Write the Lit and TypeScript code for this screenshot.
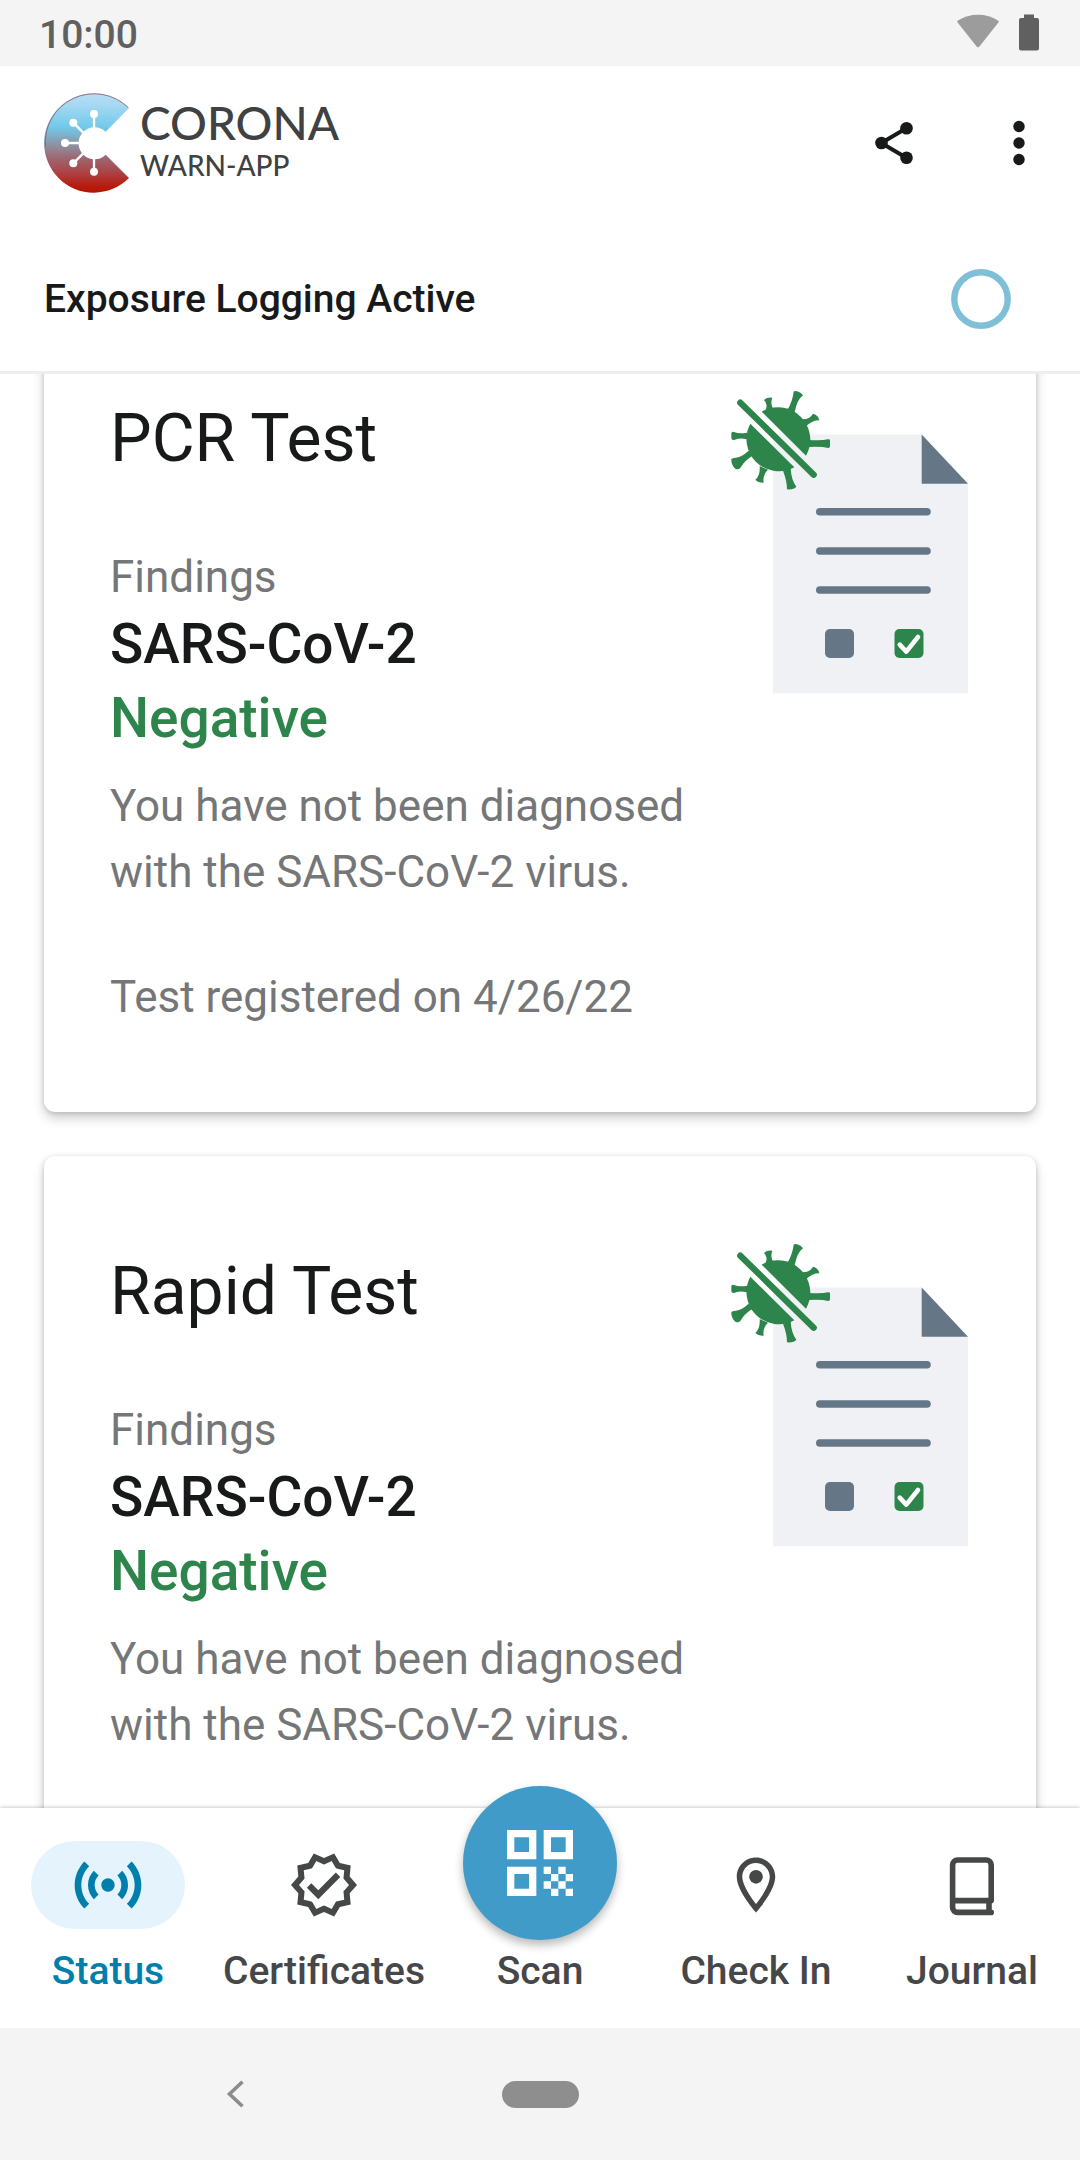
import { LitElement, html, css, svg } from "lit";
import { customElement, property, query, state } from "lit/decorators.js";
import { classMap } from "lit/directives/class-map.js";

interface TestResult {
  title: string;
  finding: string;
  result: string;
  text: string;
  registered: string;
}

const TESTS: TestResult[] = [
  {
    title: "PCR Test",
    finding: "SARS-CoV-2",
    result: "Negative",
    text: "You have not been diagnosed with the SARS-CoV-2 virus.",
    registered: "Test registered on 4/26/22",
  },
  {
    title: "Rapid Test",
    finding: "SARS-CoV-2",
    result: "Negative",
    text: "You have not been diagnosed with the SARS-CoV-2 virus.",
    registered: "Test registered on 4/26/22",
  },
];

const ICONS = {
  status: svg`<svg width="80" height="80" viewBox="0 0 24 24" fill="currentColor" aria-hidden="true">
    <path d="M7.76 16.24C6.67 15.16 6 13.66 6 12s.67-3.16 1.76-4.24l1.42 1.42C8.45 9.9 8 10.9 8 12c0 1.1.45 2.1 1.17 2.83l-1.41 1.41zm8.48 0C17.33 15.16 18 13.66 18 12s-.67-3.16-1.76-4.24l-1.42 1.42C15.55 9.9 16 10.9 16 12c0 1.1-.45 2.1-1.17 2.83l1.41 1.41zM12 10c-1.1 0-2 .9-2 2s.9 2 2 2 2-.9 2-2-.9-2-2-2zm8 2c0 2.21-.9 4.21-2.35 5.65l1.42 1.42C20.88 17.26 22 14.76 22 12s-1.12-5.26-2.93-7.07l-1.42 1.42C19.1 7.79 20 9.79 20 12zM6.35 6.35L4.93 4.93C3.12 6.74 2 9.24 2 12s1.12 5.26 2.93 7.07l1.42-1.42C4.9 16.21 4 14.21 4 12s.9-4.21 2.35-5.65z"/></svg>`,
  certificates: svg`<svg width="72" height="72" viewBox="0 0 24 24" fill="currentColor" aria-hidden="true">
    <path d="M23 11.99l-2.44-2.79.34-3.69-3.61-.82L15.4 1.5 12 2.96 8.6 1.5 6.71 4.69 3.1 5.5l.34 3.7L1 11.99l2.44 2.79-.34 3.7 3.61.82 1.89 3.2 3.4-1.47 3.4 1.46 1.89-3.19 3.61-.82-.34-3.69L23 11.99zm-3.95 1.48l-.56.65.08.85.18 1.95-1.9.43-.84.19-.44.74-.99 1.68-1.78-.77-.8-.34-.79.34-1.78.77-.99-1.67-.44-.74-.84-.19-1.9-.43.18-1.96.08-.85-.56-.65L3.67 12l1.29-1.48.56-.65-.09-.86-.18-1.94 1.9-.43.84-.19.44-.74.99-1.68 1.78.77.8.34.79-.34 1.78-.77.99 1.68.44.74.84.19 1.9.43-.18 1.95-.08.85.56.65 1.29 1.47-1.28 1.48z"/>
    <path d="M10.09 13.75l-2.32-2.33-1.48 1.49 3.8 3.81 7.34-7.36-1.48-1.49z"/></svg>`,
  scan: svg`<svg width="88" height="88" viewBox="0 0 24 24" fill="currentColor" fill-rule="evenodd" aria-hidden="true">
    <path d="M3 11h8V3H3zM5 5h4v4H5zM3 21h8v-8H3zM5 15h4v4H5zM13 3v8h8V3zM19 9h-4V5h4z"/>
    <path d="M19 19h2v2h-2zM13 13h2v2h-2zM15 15h2v2h-2zM13 17h2v2h-2zM15 19h2v2h-2zM17 17h2v2h-2zM17 13h2v2h-2zM19 15h2v2h-2z"/></svg>`,
  checkin: svg`<svg width="66" height="66" viewBox="0 0 24 24" fill="currentColor" aria-hidden="true">
    <path d="M12 2C8.13 2 5 5.13 5 9c0 5.25 7 13 7 13s7-7.75 7-13c0-3.87-3.13-7-7-7zM7 9c0-2.76 2.24-5 5-5s5 2.24 5 5c0 2.88-2.88 7.19-5 9.88C9.92 16.21 7 11.85 7 9z"/>
    <circle cx="12" cy="9" r="2.5"/></svg>`,
  journal: svg`<svg width="66" height="66" viewBox="0 0 66 66" fill="none" stroke="currentColor" stroke-width="5.6" stroke-linecap="round" aria-hidden="true">
    <path d="M52.2 48.6V13a5 5 0 0 0-5-5H18.6a5 5 0 0 0-5 5v42.4a5 5 0 0 0 5 5h33.6"/>
    <path d="M14 48.6h38M50 49v11" stroke-linecap="butt"/></svg>`,
};

const TABS: { id: keyof typeof ICONS; label: string }[] = [
  { id: "status", label: "Status" },
  { id: "certificates", label: "Certificates" },
  { id: "scan", label: "Scan" },
  { id: "checkin", label: "Check In" },
  { id: "journal", label: "Journal" },
];

@customElement("test-card")
class TestCard extends LitElement {
  @property({ attribute: false }) test!: TestResult;

  static styles = css`
    :host {
      display: block;
      color: #17191a;
      background: #fff;
      border-radius: 11px;
      box-shadow: 0 6px 12px rgba(0, 0, 0, 0.2), 0 1px 5px rgba(0, 0, 0, 0.14);
    }
    .card {
      display: flex;
      align-items: flex-start;
      padding: 66px;
    }
    .body {
      flex: 1;
      min-width: 0;
      padding: 31px 0 16px;
    }
    .art {
      flex: none;
      display: block;
    }
    h2,
    p {
      margin: 0;
      font-weight: 400;
    }
    h2 {
      font-size: 66px;
      line-height: 78px;
      margin-bottom: 73px;
    }
    .muted {
      font-size: 44px;
      line-height: 66px;
      color: #757677;
    }
    .caption {
      line-height: 52px;
    }
    .strong {
      font-size: 55px;
      line-height: 64px;
      font-weight: 500;
      margin-top: 9px;
    }
    .negative {
      color: #2e854b;
      margin: 10px 0 23px;
    }
    .date {
      margin-top: 59px;
    }
  `;

  render() {
    const t = this.test;
    return html`
      <article class="card">
        <div class="body">
          <h2>${t.title}</h2>
          <p class="muted caption">Findings</p>
          <p class="strong">${t.finding}</p>
          <p class="strong negative">${t.result}</p>
          <p class="muted">${t.text}</p>
          <p class="muted date">${t.registered}</p>
        </div>
        <svg class="art" width="246" height="330" viewBox="0 0 246 330" aria-hidden="true">
          <path d="M49 65.5H197.7L244 114.7V324.3H49Z" fill="#f0f1f4" />
          <path d="M197.7 65.5L244 114.7H197.7Z" fill="#657786" />
          <path d="M95.8 142.8H203M95.8 182H203M95.8 221H203" stroke="#657786" stroke-width="7.6" stroke-linecap="round" />
          <rect x="101" y="260" width="29" height="29" rx="5" fill="#657786" />
          <rect x="170.5" y="260" width="29" height="29" rx="5" fill="#2e854b" />
          <path d="M175.7 275.7L182.3 282.6L194 268" fill="none" stroke="#fff" stroke-width="4.6" stroke-linecap="round" stroke-linejoin="round" />
          <g transform="translate(1 16) scale(0.3333)" fill="#2e854b">
            <path d="M110 80A97 97 0 0 1 243 212Z" />
            <path d="M208 247A97 97 0 0 1 76 116Z" />
            <path d="M117 45Q126 36 142 38Q136 52 143 69L122 76Q129 57 117 45Z" />
            <path d="M206 20Q208 17 213 18Q229 22 234 31Q216 44 209 82L187 75Q203 48 206 20Z" />
            <path d="M264 86Q281 91 283 106Q264 105 244 123L231 103Q254 104 264 86Z" />
            <path d="M309 163Q315 162 315 166V184Q314 190 309 189Q290 184 252 186V165Q288 168 309 163Z" />
            <path d="M186 313Q206 315 214 305Q199 286 197 250L174 257Q186 288 186 313Z" />
            <path d="M91 284Q100 294 116 293Q112 270 129 254L104 243Q106 272 91 284Z" />
            <path d="M19 222Q26 218 33 218Q50 216 71 197L85 211Q57 228 46 249Q39 256 31 251Q18 240 19 222Z" />
            <path d="M19 145Q20 138 27 141Q42 147 66 143V163Q42 157 27 165Q19 166 19 159Z" />
            <path d="M46 53L266 269" stroke="#2e854b" stroke-width="19" stroke-linecap="round" />
          </g>
        </svg>
      </article>
    `;
  }
}

@customElement("app-root")
class AppRoot extends LitElement {
  @state() private active = "status";
  @query(".content") private content!: HTMLElement;

  static styles = css`
    :host {
      display: flex;
      flex-direction: column;
      height: 100vh;
      font-family: Roboto, "Liberation Sans", sans-serif;
      color: #17191a;
      background: #fff;
    }
    button {
      border: 0;
      padding: 0;
      background: none;
      color: inherit;
      font: inherit;
      cursor: pointer;
    }
    svg {
      display: block;
    }
    .statusbar {
      flex: none;
      display: flex;
      align-items: center;
      justify-content: space-between;
      height: 66px;
      padding: 0 41px 0 39px;
      box-sizing: border-box;
      background: #f4f4f4;
      color: #606060;
      font-size: 39px;
      line-height: 46px;
      font-weight: 500;
    }
    .clock {
      padding-top: 3px;
    }
    header {
      flex: none;
      border-bottom: 3px solid #eee;
    }
    .toolbar {
      display: flex;
      align-items: center;
      height: 154px;
      padding: 0 28px 0 44px;
    }
    .brand {
      display: flex;
      align-items: center;
      gap: 9px;
      margin-right: auto;
      font-family: Lato, sans-serif;
      font-weight: 500;
      color: #404142;
    }
    .wordmark {
      padding-bottom: 6px;
    }
    .name {
      display: block;
      font-size: 46px;
      line-height: 50px;
    }
    .sub {
      display: block;
      font-size: 28px;
      line-height: 34px;
    }
    .icon-button {
      display: grid;
      place-items: center;
      width: 66px;
      height: 88px;
    }
    .actions {
      display: flex;
      gap: 59px;
    }
    .exposure {
      display: flex;
      align-items: center;
      justify-content: space-between;
      box-sizing: border-box;
      width: 100%;
      height: 151px;
      padding: 7px 69px 0 44px;
      font-size: 39px;
      line-height: 46px;
      font-weight: 500;
    }
    .content {
      flex: 1;
      min-height: 0;
      overflow-y: auto;
      scrollbar-width: none;
      display: flex;
      flex-direction: column;
      gap: 44px;
      padding: 44px;
    }
    .content test-card {
      flex: none;
    }
    nav {
      flex: none;
      position: relative;
      display: flex;
      background: #fff;
      box-shadow: 0 0 4px rgba(0, 0, 0, 0.3);
    }
    .tab {
      flex: 1 1 0;
      min-width: 0;
      display: flex;
      flex-direction: column;
      align-items: center;
      gap: 19px;
      padding: 33px 0 34px;
      color: #464749;
      text-decoration: none;
      white-space: nowrap;
      font-size: 39px;
      line-height: 46px;
      font-weight: 500;
    }
    .tab.active {
      color: #007fad;
    }
    .slot {
      position: relative;
      display: grid;
      place-items: center;
      width: 154px;
      height: 88px;
      border-radius: 44px;
    }
    .active .slot {
      background: #e5f4fc;
    }
    .fab {
      position: absolute;
      left: 0;
      bottom: -11px;
      display: grid;
      place-items: center;
      width: 154px;
      height: 154px;
      border-radius: 50%;
      color: #fff;
      background: #419bc9;
      box-shadow: 0 5px 10px rgba(0, 0, 0, 0.28);
    }
    .system {
      flex: none;
      position: relative;
      display: grid;
      grid-template-columns: 1fr 77px 1fr;
      align-items: center;
      height: 132px;
      background: #f4f4f4;
      color: #8c8c8c;
    }
    .back {
      justify-self: center;
      padding-right: 32px;
    }
    .home {
      height: 27px;
      border-radius: 14px;
      background: #8e8e8e;
    }
  `;

  async firstUpdated() {
    // Open the list slightly scrolled, with the first card tucked under the header.
    await this.updateComplete;
    await Promise.all(
      Array.from(this.renderRoot.querySelectorAll("test-card"), (c) => (c as LitElement).updateComplete)
    );
    this.content.scrollTop = 115;
  }

  private select(id: string) {
    this.active = id;
  }

  render() {
    return html`
      <div class="statusbar">
        <span class="clock">10:00</span>
        <svg width="82" height="38" viewBox="0 0 82 38" aria-hidden="true">
          <path d="M0.6 8.6Q-0.2 7.4 1 6.4Q10 0.8 21 0.8T41 6.4Q42.2 7.4 41.4 8.6L22.4 32.6Q21 34.2 19.6 32.6Z" fill="#9c9c9c" />
          <path d="M67 0.5H77V4H80Q82 4 82 6V34.5Q82 36.5 80 36.5H64Q62 36.5 62 34.5V6Q62 4 64 4H67Z" fill="#606060" />
        </svg>
      </div>
      <header>
        <div class="toolbar">
          <div class="brand">
            <svg width="87" height="100" viewBox="41 39 261 300" aria-hidden="true">
              <defs>
                <linearGradient id="logo" x1="0" y1="40" x2="0" y2="338" gradientUnits="userSpaceOnUse">
                  <stop offset="0" stop-color="#b9dcf5" />
                  <stop offset="0.12" stop-color="#a5d8f3" />
                  <stop offset="0.34" stop-color="#72c9ea" />
                  <stop offset="0.5" stop-color="#8a98ab" />
                  <stop offset="0.64" stop-color="#9c6a76" />
                  <stop offset="0.8" stop-color="#ac4244" />
                  <stop offset="0.94" stop-color="#b81a0c" />
                  <stop offset="1" stop-color="#b61300" />
                </linearGradient>
              </defs>
              <path d="M296 84A149 149 0 1 0 296 294L226 224A48 48 0 1 1 226 155Z" fill="url(#logo)" />
              <path d="M294 83A147 147 0 0 0 45 200" fill="none" stroke="#8c5561" stroke-width="2.4" />
              <g stroke="#fff" stroke-width="7" fill="#fff">
                <path d="M191 102V150M129 128L164 163M104 189H150M129 250L164 215M191 275V230" />
              </g>
              <g fill="#fff">
                <circle cx="191" cy="102" r="12" />
                <circle cx="129" cy="128" r="12" />
                <circle cx="104" cy="189" r="12" />
                <circle cx="129" cy="250" r="12" />
                <circle cx="191" cy="275" r="12" />
              </g>
            </svg>
            <div class="wordmark">
              <span class="name">CORONA</span>
              <span class="sub">WARN-APP</span>
            </div>
          </div>
          <div class="actions">
            <button class="icon-button" aria-label="Share">
              <svg width="66" height="66" viewBox="0 0 66 66" fill="currentColor">
                <path d="M20.3 33L45.3 18.3M20.3 33L45.3 47.7" stroke="currentColor" stroke-width="4" />
                <circle cx="20.5" cy="33" r="6.3" />
                <circle cx="45.5" cy="18.3" r="6.3" />
                <circle cx="45.5" cy="47.8" r="6.3" />
              </svg>
            </button>
            <button class="icon-button" aria-label="More options">
              <svg width="66" height="66" viewBox="0 0 66 66" fill="currentColor">
                <circle cx="33" cy="16.5" r="5.7" />
                <circle cx="33" cy="33" r="5.7" />
                <circle cx="33" cy="49.5" r="5.7" />
              </svg>
            </button>
          </div>
        </div>
        <button class="exposure">
          <span>Exposure Logging Active</span>
          <svg width="60" height="60" viewBox="0 0 60 60" aria-hidden="true">
            <circle cx="30" cy="30" r="26.7" fill="none" stroke="#80bfd8" stroke-width="6.4" />
          </svg>
        </button>
      </header>
      <main class="content">${TESTS.map((t) => html`<test-card .test=${t}></test-card>`)}</main>
      <nav>
        ${TABS.map(
          (tab) => html`
            <a
              class=${classMap({ tab: true, active: tab.id === this.active })}
              href="#${tab.id}"
              @click=${() => this.select(tab.id)}
            >
              <span class="slot">
                ${tab.id === "scan" ? html`<span class="fab">${ICONS.scan}</span>` : ICONS[tab.id]}
              </span>
              <span>${tab.label}</span>
            </a>
          `
        )}
      </nav>
      <div class="system">
        <button class="back" aria-label="Back">
          <svg width="20" height="30" viewBox="0 0 20 30" fill="none" stroke="currentColor" stroke-width="3.6">
            <path d="M17.5 2.8L4.5 15L17.5 27.2" />
          </svg>
        </button>
        <button class="home" aria-label="Home"></button>
      </div>
    `;
  }
}
